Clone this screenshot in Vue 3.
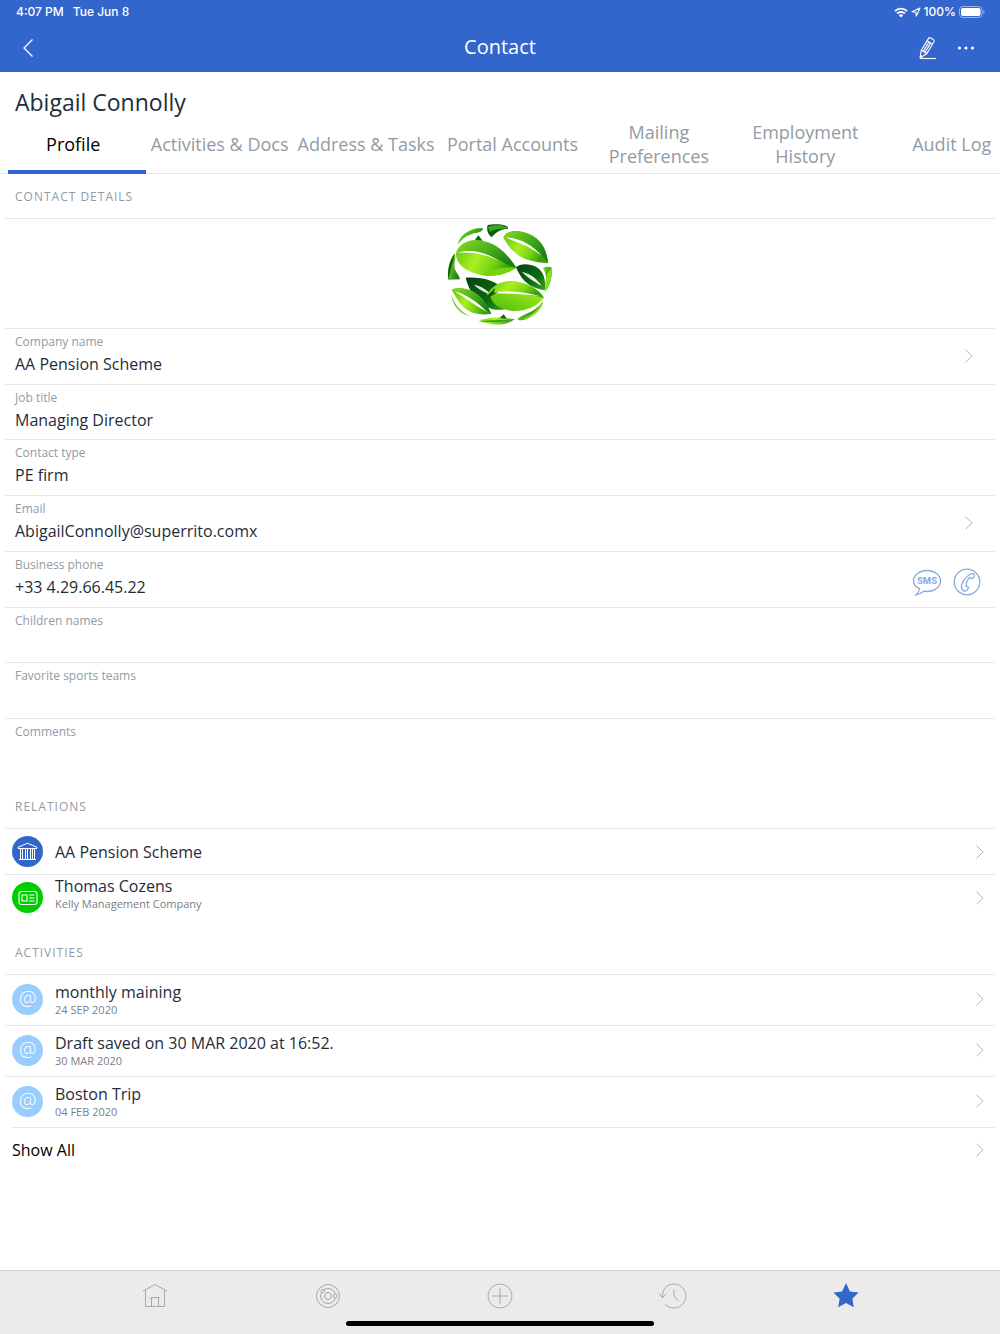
<script setup>
import { ref } from 'vue'

const tabs = [
  'Profile',
  'Activities & Docs',
  'Address & Tasks',
  'Portal Accounts',
  'Mailing Preferences',
  'Employment History',
  'Audit Log',
]
const activeTab = ref('Profile')

const fields = [
  { label: 'Company name', value: 'AA Pension Scheme', action: 'open' },
  { label: 'Job title', value: 'Managing Director' },
  { label: 'Contact type', value: 'PE firm' },
  { label: 'Email', value: 'AbigailConnolly@superrito.comx', action: 'open' },
  { label: 'Business phone', value: '+33 4.29.66.45.22', action: 'phone' },
  { label: 'Children names', value: '' },
  { label: 'Favorite sports teams', value: '' },
]

const relations = [
  { title: 'AA Pension Scheme', sub: '', kind: 'company' },
  { title: 'Thomas Cozens', sub: 'Kelly Management Company', kind: 'person' },
]

const activities = [
  { title: 'monthly maining', date: '24 SEP 2020' },
  { title: 'Draft saved on 30 MAR 2020 at 16:52.', date: '30 MAR 2020' },
  { title: 'Boston Trip', date: '04 FEB 2020' },
]
</script>

<template>
  <div class="screen">
    <header class="topbar">
      <div class="status">
        <span class="clock">4:07 PM</span>
        <span>Tue Jun 8</span>
        <span class="status-right">
          <svg width="14" height="11" viewBox="0 0 14 11" aria-hidden="true">
            <path d="M7 10.6 4.9 8.4a3 3 0 0 1 4.2 0z" fill="#fff" />
            <path d="M3.2 6.5a5.4 5.4 0 0 1 7.6 0M1 4.1a8.6 8.6 0 0 1 12 0" fill="none" stroke="#fff" stroke-width="1.9" />
          </svg>
          <svg width="10" height="10" viewBox="0 0 10 10" aria-hidden="true">
            <path d="M9 1 1 4.8l3.9.4.4 3.9z" fill="none" stroke="#fff" stroke-width="1.1" stroke-linejoin="round" />
          </svg>
          <span>100%</span>
          <svg width="26" height="12" viewBox="0 0 26 12" aria-hidden="true">
            <rect x=".5" y=".5" width="22.500" height="11" rx="3.500" fill="none" stroke="#fff" stroke-opacity=".5" />
            <rect x="2" y="2" width="19.500" height="8" rx="2" fill="#fff" />
            <path d="M24.300 4.200v3.600c.9-.4 1.300-1 1.300-1.800s-.4-1.400-1.300-1.800z" fill="#fff" fill-opacity=".55" />
          </svg>
        </span>
      </div>
      <div class="navbar">
        <button class="icon-btn" type="button" aria-label="Back">
          <svg width="12" height="20" viewBox="0 0 12 20"><path d="M10.500 1.500 2 10l8.500 8.500" fill="none" stroke="#fff" stroke-width="1.300" /></svg>
        </button>
        <h1>Contact</h1>
        <div class="nav-actions">
          <button class="icon-btn" type="button" aria-label="Edit">
            <svg width="18" height="24" viewBox="0 0 18 24" fill="none" stroke="#fff" stroke-width="1.100" stroke-linejoin="round">
              <path d="M1 21.800 2.200 14.600 9.300 2.600c.5-.9 1.300-1.100 2.100-.7l3 1.700c.8.500 1 1.300.5 2.200L7.800 17.700z" />
              <path d="M8 4.800l5.600 3.300M2.200 14.600c.9-.3 1.700.2 1.900 1 .9-.3 1.700.2 1.800 1 .8-.1 1.600.3 1.900 1.100M4.100 15.600l6-10M5.900 16.600l6-10" />
              <path d="M1.500 21.800l.4-2 1.300.8z" fill="#fff" />
              <path d="M1 22.500h16" />
            </svg>
          </button>
          <button class="icon-btn" type="button" aria-label="More">
            <svg width="24" height="6" viewBox="-3 0 24 6" fill="#fff"><circle cx="2.500" cy="3" r="1.600" /><circle cx="9" cy="3" r="1.600" /><circle cx="15.500" cy="3" r="1.600" /></svg>
          </button>
        </div>
      </div>
    </header>

    <main>
      <h2 class="name">Abigail Connolly</h2>
      <nav class="tabs">
        <div class="tab-track">
          <button
            v-for="tab in tabs"
            :key="tab"
            type="button"
            :class="['tab', { active: tab === activeTab }]"
            @click="activeTab = tab"
          >{{ tab }}</button>
        </div>
      </nav>

      <section>
        <h3>Contact details</h3>
        <div class="photo">
          <svg width="106" height="104" viewBox="51 22 318 312" role="img" aria-label="Green leaves">
            <defs>
              <linearGradient id="leafA" x1="0" y1="0" x2="1" y2="0.600"><stop offset="0" stop-color="#86dc22" /><stop offset=".5" stop-color="#4fb41a" /><stop offset="1" stop-color="#1c7f16" /></linearGradient>
              <linearGradient id="leafB" x1="0" y1="0" x2="1" y2="0.300"><stop offset="0" stop-color="#5cc012" /><stop offset=".45" stop-color="#a9f01e" /><stop offset=".75" stop-color="#74d414" /><stop offset="1" stop-color="#3a9e12" /></linearGradient>
              <linearGradient id="leafC" x1="0" y1="0" x2="1" y2="1"><stop offset="0" stop-color="#05420f" /><stop offset=".6" stop-color="#0b6917" /><stop offset="1" stop-color="#35a51b" /></linearGradient>
              <linearGradient id="leafD" x1="0" y1="1" x2="1" y2="0"><stop offset="0" stop-color="#4db80d" /><stop offset="1" stop-color="#b2fa1c" /></linearGradient>
            </defs>
            <path d="M82 87C91 57 120 36 157 37c5 5-1 11-15 14-27 4-42 14-60 36z" fill="url(#leafA)" />
            <path d="M173 28c15-3 38-3 48 0 11 3 15 8 13 12-17-1-32 6-49 25-12-10-16-22-12-37z" fill="url(#leafC)" />
            <path d="M173 34c15-8 46-10 61 4-16 1-41 2-54 11z" fill="#3ba51a" />
            <path d="M220 65c10-20 38-24 67-14 40 13 63 43 67 92-50-4-76-12-100-33-17-14-25-29-34-45z" fill="url(#leafB)" />
            <path d="M220 65c10-20 38-24 67-14 40 13 63 43 67 92-17-26-34-42-61-54-27-12-48-16-73-24z" fill="url(#leafA)" />
            <path d="M225 65c43 2 81 21 110 56-28-25-58-35-110-56z" fill="#fff" />
            <path d="M133 75l12-16 14 18z" fill="#0c6216" />
            <path d="M78 116c6-27 31-44 64-42 49 3 84 32 117 82-26 16-62 29-104 22-42-7-75-28-77-62z" fill="url(#leafB)" />
            <path d="M78 112c9-26 34-40 64-38 49 3 84 32 117 82-39-8-49-30-96-38-33-7-57-12-85-6z" fill="url(#leafA)" />
            <path d="M80 111c40-12 86-2 127 24-40-19-76-26-127-24z" fill="#fff" />
            <path d="M155 178c33-20 62-24 104-22-26 19-62 30-104 22z" fill="#76d30c" />
            <path d="M54 192c-2-35 4-60 20-79 6 18-6 32 2 51 7 12 13 19 14 27z" fill="url(#leafA)" />
            <path d="M54 190c-1-28 4-51 20-76-7 28-11 47-20 76z" fill="#095819" />
            <path d="M258 155c12-12 40-13 61-1 22 14 28 35 26 70-51-9-69-29-87-69z" fill="url(#leafC)" />
            <path d="M275 168c27 6 45 20 60 43-22-14-40-23-60-43z" fill="#dff5d5" />
            <path d="M339 157c8-5 19-5 26-1 2 26-4 49-18 72 2-24 6-48-8-71z" fill="url(#leafA)" />
            <path d="M345 210c2-21 5-37 20-54 2 26-5 47-18 72z" fill="#8de018" />
            <path d="M107 186c51-3 86 9 111 30 24 19 25 45 7 65-46 9-99-19-118-95z" fill="url(#leafC)" />
            <path d="M132 207c20 3 42 18 58 34-23-10-41-17-58-34z" fill="#d8efd0" />
            <path d="M65 222c17-10 51-6 76 14 23 18 33 38 43 59-38 5-69-3-89-26-14-17-20-31-30-47z" fill="url(#leafB)" />
            <path d="M65 222c17-10 51-6 76 14 23 18 33 38 43 59-39-28-73-61-119-73z" fill="url(#leafA)" />
            <path d="M72 226c43 13 73 36 99 63-35-19-60-40-99-63z" fill="#fff" />
            <path d="M64 236c10 33 27 52 58 67-35-9-55-33-58-67z" fill="#77cf24" />
            <path d="M171 238c20-38 62-48 103-37 33 8 55 24 68 45-24 30-62 43-101 39-33-4-53-19-59-40z" fill="url(#leafD)" />
            <path d="M171 238c20-38 62-48 103-37 33 8 55 24 68 45-51-11-112-17-171-8z" fill="url(#leafB)" />
            <path d="M188 231c46-7 94-4 143 11-51-7-94-8-143-11z" fill="#fff" />
            <path d="M171 241l24-24-3 14 12-2-26 16z" fill="#0b5d18" />
            <path d="M146 317c26-14 72-14 108-6-18 13-42 18-69 15z" fill="url(#leafB)" />
            <path d="M150 317c34-4 59-4 96-4-33 7-61 9-96 4z" fill="#3c9f18" />
            <path d="M209 307l12-11 10 13z" fill="#0c6216" />
            <path d="M264 309c17-18 51-16 76-54-5 29-37 54-65 59-9 0-13-1-11-5z" fill="url(#leafA)" />
            <path d="M276 311c26-10 45-25 64-56-5 29-34 54-64 56z" fill="#8fe01b" />
          </svg>
        </div>

        <dl class="fields">
          <div v-for="field in fields" :key="field.label" class="field">
            <dt>{{ field.label }}</dt>
            <dd>{{ field.value }}</dd>
            <dd v-if="field.action" :class="['actions', field.action]">
              <button v-if="field.action === 'open'" class="icon-btn" type="button" :aria-label="'Open ' + field.label">
                <svg width="10" height="14" viewBox="0 0 10 14"><path d="M1.500 .8 8 7l-6.500 6.200" fill="none" stroke="#b4b6b9" /></svg>
              </button>
              <template v-else>
                <button class="icon-btn" type="button" aria-label="Send text message">
                  <svg width="30" height="28" viewBox="0 0 30 28">
                    <path d="M7.500 20.700C3.800 19 1.500 16.200 1.500 13 1.500 7.200 7.500 2.500 15 2.500S28.500 7.200 28.500 13 22.500 23.500 15 23.500c-1.200 0-2.300-.1-3.400-.3-2 2-4.300 3.300-7.600 3.600 2-1.500 3.200-3.500 3.500-6.100z" fill="none" stroke="#8ea9e0" stroke-width="1.300" />
                    <text x="15" y="16" text-anchor="middle" class="sms">SMS</text>
                  </svg>
                </button>
                <button class="icon-btn" type="button" aria-label="Call">
                  <svg width="28" height="28" viewBox="0 0 28 28" fill="none" stroke="#8ea9e0" stroke-width="1.300">
                    <circle cx="14" cy="14" r="12.800" />
                    <path d="M17.200 6.300c1.400-1.100 3.700-.7 4 .7.200 1-.3 2.500-1.200 3.300-.7.500-1.900.4-2.300-.4-.3-.7-1.200-.4-2 .6-1.300 1.600-2.400 4.200-2.700 6.300-.2 1.200.2 1.700.9 1.600 1-.1 1.600.6 1.400 1.500-.2 1.300-1.100 2.500-2.300 3-1.800.6-3.800-.5-4.400-2.800-1.100-4.600 3.300-11 8.600-13.800z" />
                  </svg>
                </button>
              </template>
            </dd>
          </div>
        </dl>
        <dl class="comments">
          <dt>Comments</dt>
          <dd></dd>
        </dl>
      </section>

      <section class="relations">
        <h3>Relations</h3>
        <a v-for="item in relations" :key="item.title" href="#" class="row relation">
          <span :class="['badge', item.kind]">
            <svg v-if="item.kind === 'company'" width="21" height="19" viewBox="0 0 21 19" fill="none" stroke="#fff" stroke-width="1">
              <path d="M1 6.500V5.300L10.500 1.200 20 5.300v1.200zM2 17.500h17M3.500 6.500v11M5.500 6.500v11M8.500 6.500v11M10.500 6.500v11M13.500 6.500v11M15.500 6.500v11M17.500 6.500v11" />
            </svg>
            <svg v-else width="20" height="16" viewBox="0 0 20 16" fill="none" stroke="#fff" stroke-width="1.100">
              <rect x="1" y="1.500" width="18" height="13" rx="2.500" />
              <path d="M4 5h5v6H4zM11 5h5.500M11 8h5.500M11 11h5.500" />
            </svg>
          </span>
          <span :class="['row-text', { stacked: item.sub }]">
            <span class="row-title">{{ item.title }}</span>
            <span v-if="item.sub" class="row-sub">{{ item.sub }}</span>
          </span>
          <svg width="10" height="14" viewBox="0 0 10 14"><path d="M1.500 .8 8 7l-6.500 6.200" fill="none" stroke="#b4b6b9" /></svg>
        </a>
      </section>

      <section class="activities">
        <h3>Activities</h3>
        <a v-for="item in activities" :key="item.title" href="#" class="row activity">
          <span class="badge mail">@</span>
          <span class="row-text">
            <span class="row-title">{{ item.title }}</span>
            <span class="row-sub">{{ item.date }}</span>
          </span>
          <svg width="10" height="14" viewBox="0 0 10 14"><path d="M1.500 .8 8 7l-6.500 6.200" fill="none" stroke="#b4b6b9" /></svg>
        </a>
        <a href="#" class="show-all">
          <span>Show All</span>
          <svg width="10" height="14" viewBox="0 0 10 14"><path d="M1.500 .8 8 7l-6.500 6.200" fill="none" stroke="#b4b6b9" /></svg>
        </a>
      </section>
    </main>

    <footer class="bottombar">
      <nav class="bottom-nav">
        <button class="icon-btn" type="button" aria-label="Home">
          <svg width="28" height="28" viewBox="-1 0 28 28" fill="none" stroke="#a9a9a9">
            <path d="M2 9 14 2.500 26 9M4.500 8v16.500h19V8M10.500 24.500v-9h7v9M9.500 15.500h9" />
          </svg>
        </button>
        <button class="icon-btn" type="button" aria-label="Radar">
          <svg width="28" height="28" viewBox="-1 0 28 28" fill="none" stroke="#a9a9a9">
            <circle cx="14" cy="14" r="11.500" />
            <circle cx="14" cy="14" r="7.500" />
            <circle cx="14" cy="14" r="3.500" />
            <circle cx="8.800" cy="9" r="1.600" fill="#ebebeb" />
            <circle cx="21.300" cy="14" r="1.900" fill="#ebebeb" />
          </svg>
        </button>
        <button class="icon-btn" type="button" aria-label="Add">
          <svg width="28" height="28" viewBox="0 0 28 28" fill="none" stroke="#a9a9a9">
            <circle cx="14" cy="14" r="12" />
            <path d="M14 6v16M6 14h16" />
          </svg>
        </button>
        <button class="icon-btn" type="button" aria-label="History">
          <svg width="30" height="28" viewBox="0 0 30 28" fill="none" stroke="#a9a9a9">
            <path d="M4.500 15.500C4 7.500 9 2 16 2a12 12 0 1 1-8.500 20.500M1 11.500l3.500 4.300 4-4.300M16 7.500V14l4.500 5" />
          </svg>
        </button>
        <button class="icon-btn" type="button" aria-label="Favorites">
          <svg width="28" height="28" viewBox="0 0 28 28" fill="#3366cc">
            <path d="M14 1l3.900 8.600 8.600 1-6.200 6.200 1.500 8.400L14 21l-7.800 4.200 1.500-8.400-6.200-6.200 8.600-1z" />
          </svg>
        </button>
      </nav>
      <div class="home-indicator"></div>
    </footer>
  </div>
</template>

<style>
body {
  margin: 0;
  background: #fff;
}
</style>

<style scoped>
.screen {
  display: flex;
  flex-direction: column;
  min-height: 100vh;
  font-family: "Open Sans", "Noto Sans", sans-serif;
  font-size: 16px;
  line-height: 24px;
  color: #1f2d3a;
}
h1, h2, h3, dl, dd {
  margin: 0;
  font-weight: 400;
}
svg {
  display: block;
  flex: none;
}
a {
  color: inherit;
  text-decoration: none;
}
button {
  padding: 0;
  border: 0;
  background: none;
  font: inherit;
  cursor: pointer;
}

.topbar {
  background: #3366cc;
  color: #fff;
}
.status {
  display: flex;
  align-items: center;
  gap: 9px;
  height: 24px;
  padding: 0 15px 0 16px;
  font: 500 12px/24px Inter, "Liberation Sans", sans-serif;
}
.status-right {
  display: flex;
  align-items: center;
  gap: 3px;
  margin-left: auto;
}
.navbar {
  display: grid;
  grid-template-columns: 1fr auto 1fr;
  align-items: center;
  height: 48px;
  padding: 0 22px;
}
h1 {
  padding-bottom: 2px;
  font-size: 20px;
  line-height: 28px;
}
.nav-actions {
  display: flex;
  align-items: center;
  justify-content: flex-end;
  gap: 17px;
}

.name {
  padding: 14px 15px 0;
  font-size: 23px;
  line-height: 32px;
}
.tabs {
  overflow: hidden;
  box-shadow: inset 0 -1px 0 #e3e5e8;
}
.tab-track {
  display: flex;
  height: 56px;
  margin-right: -25px;
}
.tab {
  position: relative;
  flex: 1 1 0;
  padding: 0 4px 4px;
  font-size: 18px;
  line-height: 24px;
  color: #929ba5;
}
.tab.active {
  color: #000;
}
.tab.active::after {
  content: "";
  position: absolute;
  left: 8px;
  right: 0;
  bottom: 0;
  height: 4px;
  background: #3366cc;
}

h3 {
  height: 44px;
  padding-left: 15px;
  font-size: 12px;
  line-height: 46px;
  letter-spacing: 1px;
  text-transform: uppercase;
  color: #929ba5;
}
.photo {
  display: flex;
  justify-content: center;
  margin: 0 5px;
  padding: 4px 0 1px;
  border-top: 1px solid #e4e7ec;
}
.fields {
  display: grid;
  grid-auto-rows: 1fr;
  min-height: 390px;
  margin: 0 5px;
}
.field,
.comments {
  display: grid;
  grid-template-columns: 1fr auto;
  grid-template-rows: 16px 24px;
  align-content: start;
  row-gap: 2px;
  padding: 5px 10px 0;
  border-top: 1px solid #e4e7ec;
}
dt {
  grid-column: 1;
  font-size: 12px;
  line-height: 16px;
  color: #929ba5;
}
dd {
  grid-column: 1;
}
.comments {
  margin: 0 5px;
  padding-bottom: 18px;
}
.actions {
  grid-column: 2;
  grid-row: 1 / 3;
  display: flex;
  align-items: center;
  gap: 11px;
}
.open {
  padding: 2px 11px 0 0;
}
.phone {
  padding: 8px 4px 0 0;
}
.sms {
  font: 700 9px Inter, "Liberation Sans", sans-serif;
  fill: #8ea9e0;
}

.row {
  display: flex;
  align-items: center;
  gap: 12px;
  margin: 0 5px;
  padding: 0 10px 0 7px;
  border-top: 1px solid #e4e7ec;
}
.relation {
  height: 45px;
}
.activity {
  height: 48px;
  padding-bottom: 2px;
}
.relations {
  padding-bottom: 10px;
}
.badge {
  display: flex;
  flex: none;
  align-items: center;
  justify-content: center;
  width: 31px;
  height: 31px;
  border-radius: 50%;
  color: #fff;
}
.company {
  background: #3366cc;
}
.person {
  background: #00cc00;
}
.mail {
  background: #99ccff;
  font-size: 20px;
  font-weight: 300;
  line-height: 28px;
}
.row-text {
  display: flex;
  flex: 1;
  flex-direction: column;
}
.stacked {
  align-self: flex-start;
}
.row-title {
  line-height: 22px;
}
.row-sub {
  font-size: 11px;
  line-height: 14px;
  color: #797f87;
}
.show-all {
  display: flex;
  align-items: center;
  justify-content: space-between;
  height: 44px;
  margin: 0 5px 0 12px;
  padding-right: 10px;
  border-top: 1px solid #e4e7ec;
  color: #000;
}

.bottombar {
  margin-top: auto;
  padding-bottom: 8px;
  border-top: 1px solid #d4d4d4;
  background: #ebebeb;
}
.bottom-nav {
  display: flex;
  padding: 11px 68px;
}
.bottom-nav .icon-btn {
  display: flex;
  flex: 1;
  justify-content: center;
}
.home-indicator {
  width: 308px;
  height: 5px;
  margin: 0 auto;
  border-radius: 3px;
  background: #000;
}
</style>
